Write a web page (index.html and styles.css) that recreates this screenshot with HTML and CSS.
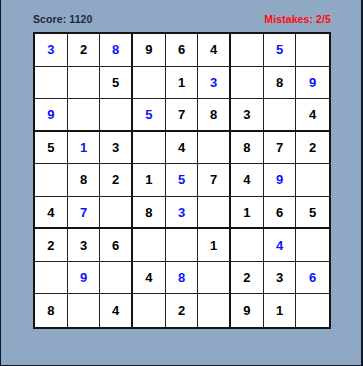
FILE: index.html
```html
<!DOCTYPE html>
<html>
<head>
    <title>Sudoku</title>
    <link rel="stylesheet" href="styles.css">
</head>
<body>
    <!-- Game window -->
    <div class="window">
        <!-- Score and mistakes -->
        <div class="status">
            <span class="score">Score: 1120</span>
            <span class="mistakes">Mistakes: 2/5</span>
        </div>

        <!-- 9x9 board, filled by the script below -->
        <div id="board" class="board"></div>
    </div>

    <script>
        // 0 = empty, negative = number entered by the player (blue)
        const puzzle = [
            [-3, 2, -8, 9, 6, 4, 0, -5, 0],
            [0, 0, 5, 0, 1, -3, 0, 8, -9],
            [-9, 0, 0, -5, 7, 8, 3, 0, 4],
            [5, -1, 3, 0, 4, 0, 8, 7, 2],
            [0, 8, 2, 1, -5, 7, 4, -9, 0],
            [4, -7, 0, 8, -3, 0, 1, 6, 5],
            [2, 3, 6, 0, 0, 1, 0, -4, 0],
            [0, -9, 0, 4, -8, 0, 2, 3, -6],
            [8, 0, 4, 0, 2, 0, 9, 1, 0]
        ];

        const board = document.getElementById('board');

        puzzle.forEach((row, r) => {
            row.forEach((value, c) => {
                const cell = document.createElement('div');
                cell.className = 'cell';
                if (c % 3 === 2 && c < 8) cell.classList.add('box-right');
                if (r % 3 === 2 && r < 8) cell.classList.add('box-bottom');
                if (c === 8) cell.classList.add('last-col');
                if (r === 8) cell.classList.add('last-row');
                if (value < 0) cell.classList.add('user');
                cell.textContent = value === 0 ? '' : Math.abs(value);
                board.appendChild(cell);
            });
        });
    </script>
</body>
</html>
```

FILE: styles.css
```css
/* Page */
body {
    margin: 0;
    font-family: "Liberation Sans", Arial, sans-serif;
}

/* Window frame */
.window {
    box-sizing: border-box;
    width: 363px;
    height: 366px;
    background-color: #8fa9c5;
    border-left: 1px solid #0d1726;
    border-right: 2px solid #0d1726;
    border-bottom: 1px solid #0d1726;
    padding: 13px 0 0 32px;
}

/* Score line */
.status {
    display: flex;
    justify-content: space-between;
    width: 298px;
    height: 19px;
    font-size: 10.5px;
    font-weight: bold;
    line-height: 13px;
    letter-spacing: 0.1px;
}

.score {
    color: #1f2a3a;
}

.mistakes {
    color: #ff0a0a;
}

/* Board */
.board {
    box-sizing: border-box;
    width: 298px;
    height: 297px;
    background: #fff;
    border: 2px solid #141414;
    display: grid;
    grid-template-columns: repeat(9, 1fr);
    grid-template-rows: repeat(9, 1fr);
}

.cell {
    display: flex;
    align-items: center;
    justify-content: center;
    border-right: 1px solid #222;
    border-bottom: 1px solid #222;
    font-size: 13px;
    font-weight: bold;
    color: #000;
}

.cell.box-right {
    border-right: 2px solid #141414;
}

.cell.box-bottom {
    border-bottom: 2px solid #141414;
}

.cell.last-col {
    border-right: none;
}

.cell.last-row {
    border-bottom: none;
}

/* Numbers entered by the player */
.cell.user {
    color: #0a14ff;
}
```
